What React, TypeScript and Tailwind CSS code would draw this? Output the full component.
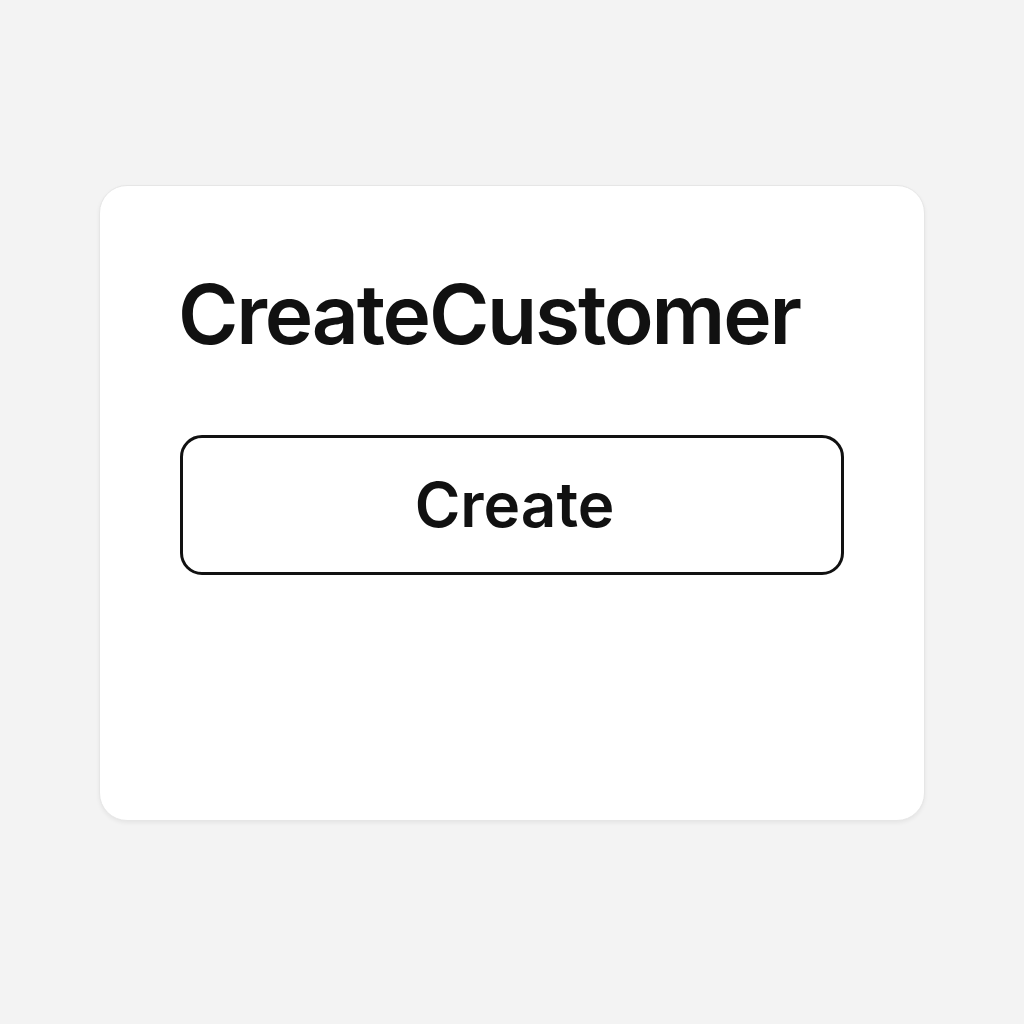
import React from 'react';

const App: React.FC = () => {
  return (
    <div
      className="w-full h-screen bg-[#f3f3f3] flex items-center justify-center pb-[18px]"
      style={{ fontFamily: 'Inter, "Liberation Sans", sans-serif' }}
    >
      <div className="w-[826px] h-[636px] bg-white rounded-[28px] border border-[#e6e6e6] shadow-[0_2px_4px_rgba(0,0,0,0.06)] pt-[88px] px-[80px] flex flex-col">
        <h1 className="-ml-[2px] text-[82px] leading-none font-semibold text-[#111] tracking-[-0.027em]">
          CreateCustomer
        </h1>

        <button
          type="button"
          className="mt-[79px] h-[140px] w-full rounded-[22px] border-[3px] border-[#111] bg-white flex items-center justify-center pl-[5px] text-[62px] font-semibold text-[#111] leading-none"
        >
          Create
        </button>
      </div>
    </div>
  );
};

export default App;
